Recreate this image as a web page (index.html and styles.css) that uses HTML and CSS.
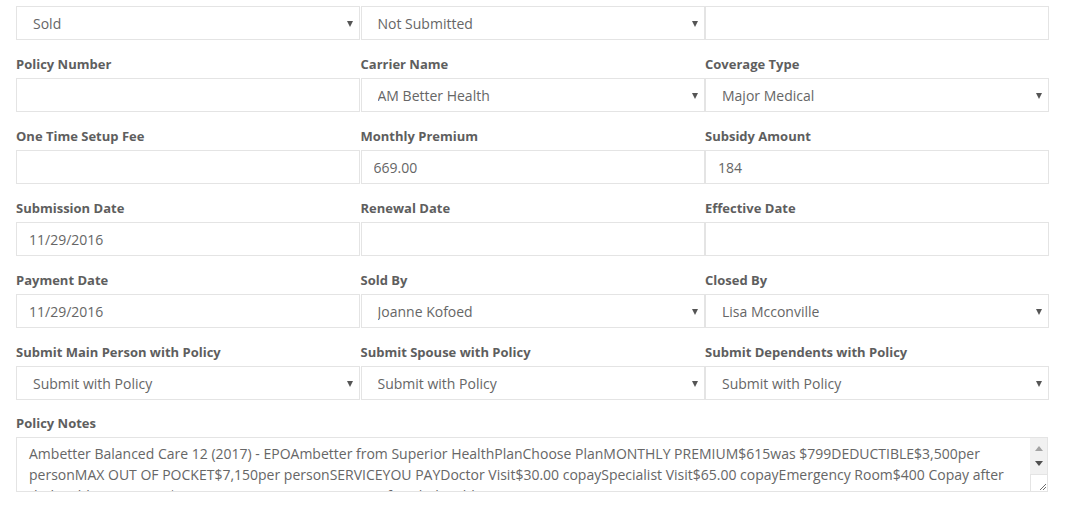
FILE: index.html
```html
<!DOCTYPE html>
<html>
<head>
<meta charset="utf-8">
<link rel="stylesheet" href="styles.css">
</head>
<body>
<form class="form">
  <div class="grid">
    <div class="field">
      <div class="sel"><select class="ctl"><option>Sold</option></select></div>
    </div>
    <div class="field">
      <div class="sel"><select class="ctl"><option>Not Submitted</option></select></div>
    </div>
    <div class="field">
      <input class="ctl inp" type="text" value="">
    </div>

    <div class="field">
      <label class="lbl">Policy Number</label>
      <input class="ctl inp" type="text" value="">
    </div>
    <div class="field">
      <label class="lbl">Carrier Name</label>
      <div class="sel"><select class="ctl"><option>AM Better Health</option></select></div>
    </div>
    <div class="field">
      <label class="lbl">Coverage Type</label>
      <div class="sel"><select class="ctl"><option>Major Medical</option></select></div>
    </div>

    <div class="field">
      <label class="lbl">One Time Setup Fee</label>
      <input class="ctl inp" type="text" value="">
    </div>
    <div class="field">
      <label class="lbl">Monthly Premium</label>
      <input class="ctl inp" type="text" value="669.00">
    </div>
    <div class="field">
      <label class="lbl">Subsidy Amount</label>
      <input class="ctl inp" type="text" value="184">
    </div>

    <div class="field">
      <label class="lbl">Submission Date</label>
      <input class="ctl inp" type="text" value="11/29/2016">
    </div>
    <div class="field">
      <label class="lbl">Renewal Date</label>
      <input class="ctl inp" type="text" value="">
    </div>
    <div class="field">
      <label class="lbl">Effective Date</label>
      <input class="ctl inp" type="text" value="">
    </div>

    <div class="field">
      <label class="lbl">Payment Date</label>
      <input class="ctl inp" type="text" value="11/29/2016">
    </div>
    <div class="field">
      <label class="lbl">Sold By</label>
      <div class="sel"><select class="ctl"><option>Joanne Kofoed</option></select></div>
    </div>
    <div class="field">
      <label class="lbl">Closed By</label>
      <div class="sel"><select class="ctl"><option>Lisa Mcconville</option></select></div>
    </div>

    <div class="field">
      <label class="lbl">Submit Main Person with Policy</label>
      <div class="sel"><select class="ctl"><option>Submit with Policy</option></select></div>
    </div>
    <div class="field">
      <label class="lbl">Submit Spouse with Policy</label>
      <div class="sel"><select class="ctl"><option>Submit with Policy</option></select></div>
    </div>
    <div class="field">
      <label class="lbl">Submit Dependents with Policy</label>
      <div class="sel"><select class="ctl"><option>Submit with Policy</option></select></div>
    </div>
  </div>

  <div class="field notes">
    <label class="lbl">Policy Notes</label>
    <div class="txtwrap">
      <textarea class="ctl txt">Ambetter Balanced Care 12 (2017) - EPOAmbetter from Superior HealthPlanChoose PlanMONTHLY PREMIUM$615was $799DEDUCTIBLE$3,500per personMAX OUT OF POCKET$7,150per personSERVICEYOU PAYDoctor Visit$30.00 copaySpecialist Visit$65.00 copayEmergency Room$400 Copay after deductibleGeneric RX$15.00 copayPrescription Drugs after deductible</textarea>
      <div class="sbar" aria-hidden="true">
        <div class="sb-track">
          <span class="sb-up"></span>
          <span class="sb-down"></span>
        </div>
        <div class="sb-corner">
          <svg width="9" height="9" viewBox="0 0 9 9"><path d="M8 2 L2 8 M8 5 L5 8" stroke="#6e6e6e" stroke-width="1" fill="none"/></svg>
        </div>
      </div>
    </div>
  </div>
</form>
</body>
</html>
```

FILE: styles.css
```css
html, body {
  margin: 0;
  padding: 0;
  background: #ffffff;
}

body {
  font-family: "Open Sans", "Liberation Sans", sans-serif;
  color: #666666;
}

.form {
  padding: 6px 16px 0 16px;
  width: 1033px;
}

.grid {
  display: grid;
  grid-template-columns: 344px 344px 344px;
  column-gap: 0.5px;
}

.field {
  display: flex;
  flex-direction: column;
  margin-bottom: 15px;
}

.lbl {
  display: block;
  font-size: 13px;
  font-weight: 700;
  line-height: 18px;
  color: #5e5e5e;
  margin-bottom: 5px;
}

.ctl {
  box-sizing: border-box;
  width: 100%;
  height: 34px;
  margin: 0;
  border: 1px solid #e4e4e4;
  border-radius: 0;
  background: #ffffff;
  font-family: "Open Sans", "Liberation Sans", sans-serif;
  font-size: 14px;
  color: #666666;
  outline: none;
}

.inp {
  padding: 0 12px;
}

.sel {
  position: relative;
}

.sel select {
  -webkit-appearance: none;
  appearance: none;
  padding: 0 30px 0 16px;
}

.sel::after {
  content: "";
  position: absolute;
  right: 7px;
  top: 15px;
  width: 0;
  height: 0;
  border-left: 3.5px solid transparent;
  border-right: 3.5px solid transparent;
  border-top: 6px solid #555555;
  pointer-events: none;
}

.notes {
  width: 1032px;
  margin-top: -1px;
}

.txtwrap {
  position: relative;
}

.txt {
  display: block;
  height: 55px;
  padding: 5px 30px 5px 12px;
  line-height: 21px;
  overflow: hidden;
  resize: none;
  font-size: 14px;
}

.sbar {
  position: absolute;
  top: 1px;
  right: 1px;
  bottom: 1px;
  width: 17px;
  display: flex;
  flex-direction: column;
}

.sb-track {
  flex: 1;
  background: #f1f1f1;
  display: flex;
  flex-direction: column;
  align-items: center;
  justify-content: space-around;
  padding: 3px 0;
}

.sb-up {
  width: 0;
  height: 0;
  border-left: 4px solid transparent;
  border-right: 4px solid transparent;
  border-bottom: 5px solid #a3a3a3;
}

.sb-down {
  width: 0;
  height: 0;
  border-left: 4px solid transparent;
  border-right: 4px solid transparent;
  border-top: 5px solid #505050;
}

.sb-corner {
  height: 17px;
  background: #ffffff;
  border-top: 1px solid #e4e4e4;
  border-left: 1px solid #e4e4e4;
  box-sizing: border-box;
  display: flex;
  align-items: flex-end;
  justify-content: flex-end;
}

.sb-corner svg {
  display: block;
}
```
